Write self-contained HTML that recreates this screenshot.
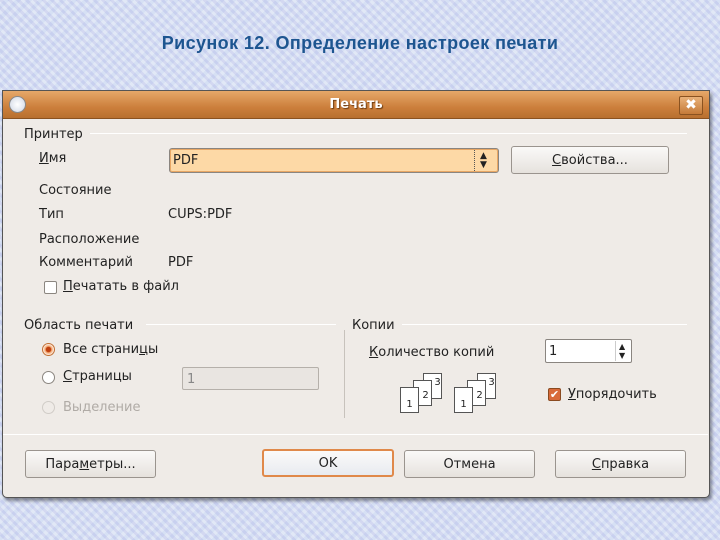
<!DOCTYPE html>
<html><head><meta charset="utf-8"><style>
*{margin:0;padding:0;box-sizing:border-box}
body{width:720px;height:540px;overflow:hidden;position:relative;font-family:"DejaVu Sans","Liberation Sans",sans-serif;font-size:13px;color:#222;
background:#cdd9f0;background-image:repeating-linear-gradient(45deg,rgba(255,255,255,.25) 0 3px,rgba(200,190,235,.25) 3px 6px),repeating-linear-gradient(-45deg,rgba(255,255,255,.2) 0 4px,rgba(180,200,240,.2) 4px 8px);}
.a{position:absolute;white-space:nowrap}
.t{margin-top:2px}
h1{position:absolute;left:0;width:720px;top:33px;text-align:center;font-family:"Liberation Sans",sans-serif;font-size:18px;letter-spacing:0.4px;font-weight:bold;color:#1d5590}
#dlg{position:absolute;left:2px;top:90px;width:708px;height:408px;background:#efebe7;border:1px solid #555;border-radius:0 0 5px 5px;box-shadow:2px 3px 3px rgba(0,0,0,.4)}
#tb{position:absolute;left:0;top:0;width:706px;height:28px;background:linear-gradient(#e6a869,#cc7f3c 60%,#b8702f);border-bottom:1px solid #8a5220}
.btn{position:absolute;height:28px;border:1px solid #9a948e;border-radius:3px;background:linear-gradient(#faf9f8,#e6e2dd);text-align:center;line-height:28px}
.line{position:absolute;height:1px;background:#c7c2bc;border-bottom:1px solid #fff}
.u{text-decoration:underline}
.rad{position:absolute;width:13px;height:13px;border-radius:50%;border:1px solid #8b8680;background:#fff}
.pg{position:absolute;width:19px;height:26px;background:#fff;border:1px solid #555;font-size:10px;text-align:center;padding-top:11px}
</style></head><body>
<h1>Рисунок 12. Определение настроек печати</h1>
<div id="dlg">
<div id="tb">
<div class="a" style="left:6px;top:5px;width:17px;height:17px;border-radius:50%;background:radial-gradient(#fff,#cfd6e4);border:1px solid #888"></div>
<div class="a" style="left:0;width:706px;text-align:center;top:6px;font-weight:bold;color:#fff;font-size:13px;text-shadow:1px 1px 1px #6a3a10">Печать</div>
<div class="a" style="left:676px;top:5px;width:24px;height:19px;border:1px solid #8a5220;border-radius:2px;background:linear-gradient(#e9b27a,#c57a38);color:#fff;text-align:center;line-height:17px;font-weight:bold;font-size:14px">✖</div>
</div>
</div>
<div class="a t" style="left:24px;top:125px">Принтер</div>
<div class="line" style="left:90px;top:133px;width:597px"></div>
<div class="a t" style="left:39px;top:149px"><span class="u">И</span>мя</div>
<div class="a" style="left:169px;top:148px;width:330px;height:25px;border:1px solid #8a8580;border-radius:3px;background:#fdd9a6;padding:4px 3px;box-shadow:inset 0 0 0 1px #e8a765">PDF</div>
<div class="a" style="left:474px;top:150px;width:1px;height:21px;border-left:1px dotted #555"></div>
<div class="a" style="left:480px;top:152px;font-size:9px;line-height:9px">▲<br>▼</div>
<div class="btn" style="left:511px;top:146px;width:158px"><span class="u">С</span>войства...</div>
<div class="a t" style="left:39px;top:181px">Состояние</div>
<div class="a t" style="left:39px;top:205px">Тип</div>
<div class="a t" style="left:168px;top:205px">CUPS:PDF</div>
<div class="a t" style="left:39px;top:230px">Расположение</div>
<div class="a t" style="left:39px;top:253px">Комментарий</div>
<div class="a t" style="left:168px;top:253px">PDF</div>
<div class="a" style="left:44px;top:281px;width:13px;height:13px;border:1px solid #8b8680;border-radius:2px;background:#fff"></div>
<div class="a t" style="left:63px;top:277px"><span class="u">П</span>ечатать в файл</div>
<div class="a t" style="left:24px;top:316px">Область печати</div>
<div class="line" style="left:146px;top:324px;width:190px"></div>
<div class="a" style="left:344px;top:330px;width:1px;height:88px;background:#c7c2bc"></div>
<div class="rad" style="left:42px;top:343px;background:radial-gradient(#c04010 30%,#f3a36a 40%,#fff 75%);border-color:#c27035"></div>
<div class="a t" style="left:63px;top:340px">Все страни<span class="u">ц</span>ы</div>
<div class="rad" style="left:42px;top:371px"></div>
<div class="a t" style="left:63px;top:367px"><span class="u">С</span>траницы</div>
<div class="a" style="left:182px;top:367px;width:137px;height:23px;border:1px solid #b5b0aa;border-radius:2px;background:#e9e5e1;color:#888;padding:4px 4px">1</div>
<div class="rad" style="left:42px;top:401px;border-color:#d0ccc7;background:#efebe7"></div>
<div class="a t" style="left:63px;top:398px;color:#b0aba6">Вы<span class="u">д</span>еление</div>
<div class="a t" style="left:352px;top:316px">Копии</div>
<div class="line" style="left:402px;top:324px;width:285px"></div>
<div class="a t" style="left:369px;top:343px"><span class="u">К</span>оличество копий</div>
<div class="a" style="left:545px;top:339px;width:87px;height:24px;border:1px solid #8a8580;border-radius:2px;background:#fff;padding:4px 3px">1</div>
<div class="a" style="left:615px;top:341px;width:1px;height:20px;background:#ccc"></div>
<div class="a" style="left:619px;top:342px;font-size:8px;line-height:9px">▲<br>▼</div>
<div class="pg" style="left:423px;top:373px;padding:3px 0 0 10px">3</div>
<div class="pg" style="left:413px;top:380px;padding:9px 0 0 6px">2</div>
<div class="pg" style="left:400px;top:387px">1</div>
<div class="pg" style="left:477px;top:373px;padding:3px 0 0 10px">3</div>
<div class="pg" style="left:467px;top:380px;padding:9px 0 0 6px">2</div>
<div class="pg" style="left:454px;top:387px">1</div>
<div class="a" style="left:548px;top:388px;width:13px;height:13px;border:1px solid #8a4a20;border-radius:2px;background:#d86a3a;color:#fff;font-size:11px;line-height:11px;text-align:center">✔</div>
<div class="a t" style="left:568px;top:385px"><span class="u">У</span>порядочить</div>
<div class="line" style="left:3px;top:434px;width:705px"></div>
<div class="btn" style="left:25px;top:450px;width:131px">Пара<span class="u">м</span>етры...</div>
<div class="btn" style="left:262px;top:449px;width:132px;border:2px solid #e0894a;line-height:26px;background:linear-gradient(#fbfaf9,#e8ebf0)">OK</div>
<div class="btn" style="left:404px;top:450px;width:131px">Отмена</div>
<div class="btn" style="left:555px;top:450px;width:131px"><span class="u">С</span>правка</div>
</body></html>
